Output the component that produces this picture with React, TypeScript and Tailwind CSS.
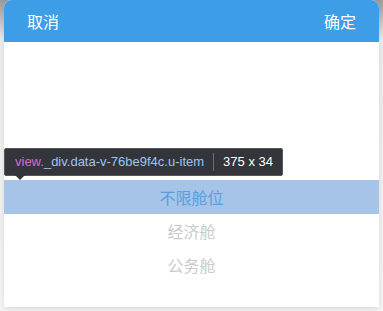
import React from 'react'

const items = ['不限舱位', '经济舱', '公务舱']

export default function App() {
  return (
    <div
      className="w-[383px] h-[311px] overflow-hidden bg-[linear-gradient(to_bottom,#9a9a9a,#eeeeee_40px,#f6f6f6)] px-[4px]"
      style={{ fontFamily: '"Noto Sans CJK SC", "Liberation Sans", sans-serif' }}
    >
      <div className="relative h-[307px] bg-white rounded-t-[8px] overflow-visible shadow-[0_2px_6px_rgba(0,0,0,0.12)]">
        {/* header */}
        <div className="h-[42px] bg-[#3d9de6] rounded-t-[8px] flex items-center justify-between px-[23px] text-white text-[16px]">
          <span>取消</span>
          <span>确定</span>
        </div>

        {/* picker rows */}
        <div className="pt-[138px]">
          {items.map((item, i) => (
            <div
              key={item}
              className={
                i === 0
                  ? 'h-[34px] flex items-center justify-center bg-[#a5c4e8] text-[#5b9ee0] text-[16px]'
                  : 'h-[34px] flex items-center justify-center text-[#cacaca] text-[16px]'
              }
            >
              {item}
            </div>
          ))}
        </div>

        {/* devtools tooltip */}
        <div className="absolute left-0 top-[148px] h-[28px] flex items-center bg-[#33353b] rounded-[2px] pl-[10px] pr-[9px] text-[13px] border border-[#55575c]" style={{ fontFamily: '"Liberation Sans", sans-serif' }}>
          <span className="text-[#d36bd9]">view.</span>
          <span className="text-[#9fc4ef]">_div.data-v-76be9f4c.u-item</span>
          <span className="mx-[9px] w-px h-[18px] bg-[#6b6d72]" />
          <span className="text-white">375 x 34</span>
          <span className="absolute left-[10px] top-full w-0 h-0 border-l-[5px] border-r-[5px] border-t-[5px] border-l-transparent border-r-transparent border-t-[#33353b]" />
        </div>
      </div>
    </div>
  )
}
